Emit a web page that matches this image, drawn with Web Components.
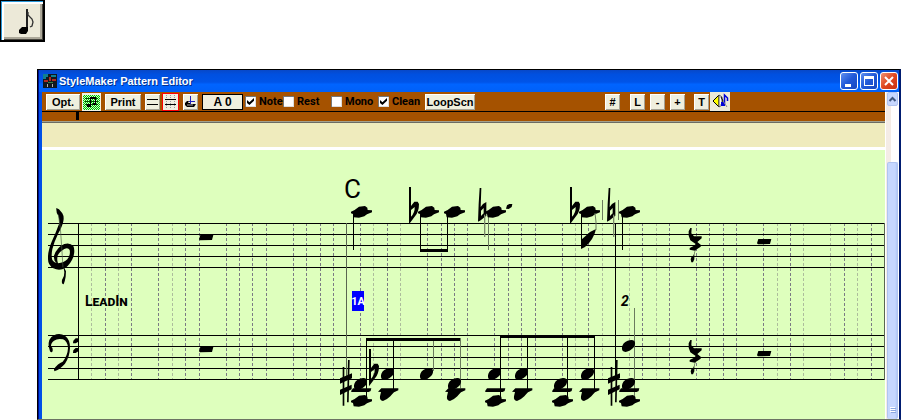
<!DOCTYPE html>
<html lang="en">
<head>
<meta charset="utf-8">
<title>StyleMaker Pattern Editor</title>
<style>
body { margin: 0; background: #fff; font-family: "Liberation Sans", Arial, sans-serif; }
pattern-window { margin: 27px 0 0 37px; }
</style>
</head>
<body>
<note-button></note-button>
<pattern-window caption="StyleMaker Pattern Editor">
    <tool-bar slot="tools">
        <tool-button label="Opt." style="--w:34px"></tool-button>
        <tool-button label="Edit notes" icon="pattern" flat style="--w:19px"></tool-button>
        <tool-button label="Print" style="--w:36px; margin-left:2px"></tool-button>
        <tool-button label="Staff" icon="staff" style="--w:15px; margin-left:2px"></tool-button>
        <tool-button label="Grid" icon="grid" flat style="--w:17px"></tool-button>
        <tool-button label="Hand" icon="hand" style="--w:15px; margin-left:2px"></tool-button>
        <tool-button label="A 0" outline style="--w:41px; margin-left:2px"></tool-button>
        <tool-check label="Note" checked style="--w:36px"></tool-check>
        <tool-check label="Rest" style="--w:46px"></tool-check>
        <tool-check label="Mono" style="--w:45px"></tool-check>
        <tool-check label="Clean" checked style="--w:45px"></tool-check>
        <tool-button label="LoopScn" style="--w:50px"></tool-button>
        <tool-button slot="right" label="#" style="--w:15px"></tool-button>
        <tool-button slot="right" label="L" style="--w:15px; margin-left:5px"></tool-button>
        <tool-button slot="right" label="-" style="--w:15px"></tool-button>
        <tool-button slot="right" label="+" style="--w:15px"></tool-button>
        <tool-button slot="right" label="T" style="--w:15px; margin-left:4px"></tool-button>
        <tool-button slot="right" label="Play" icon="play" flat style="--w:20px; margin-left:-4px"></tool-button>
    </tool-bar>
    <score-view></score-view>
</pattern-window>

<script>
class NoteButton extends HTMLElement
{
    constructor() {
        super();
        this.attachShadow({ mode: "open" });
        this.shadowRoot.innerHTML = `
            <style>
            :host { display: block; }
            button {
                display: block; width: 45px; height: 42px; padding: 0;
                border: 1px solid #000; border-right-width: 2px; border-bottom-width: 2px;
                background: #ece9d8;
                box-shadow: inset 1px 1px #2898d8, inset 3px 3px #fff, inset -1px -1px #45433c, inset -3px -3px #aca899;
            }
            svg { display: block; }
            </style>
            <button aria-label="Note">
                <svg width="42" height="39" viewBox="0 0 42 39">
                    <path d="M25 8h2v22h-2z" fill="#222"/>
                    <path d="M18 29l3-3h6v4l-2 3h-5l-2-1z"/>
                    <path d="M27 11v3l4 4 1 3-1 4-2 1" fill="none" stroke="#333" stroke-width="1.3"/>
                </svg>
            </button>
        `;
    }
}

const ICONS = {
    pattern: `<svg width="19" height="18" viewBox="0 0 19 18">
        <defs><pattern id="d" width="2" height="2" patternUnits="userSpaceOnUse"><path d="M0 0h1v1H0zM1 1h1v1H1z" fill="#00c000"/></pattern></defs>
        <path d="M0 0h19v18H0z" fill="#f4f4e8"/><path d="M1 2h17v15H1z" fill="#c8ffc8"/><path d="M1 2h17v15H1z" fill="url(#d)"/>
        <path d="M3 5.500h13M3 8.500h13M3 11.500h13" stroke="#005000"/><path d="M8 4h6v7h-1V6H9v6H8z"/><path d="M5 11h4v3H5zM11 10h3v2h-3z"/></svg>`,
    staff: `<svg width="15" height="16" viewBox="0 0 15 16"><path d="M2 5.500h11M2 10.500h11" stroke="#000"/></svg>`,
    grid: `<svg width="17" height="18" viewBox="0 0 17 18"><path d="M0 0h17v18H0z" fill="#f00"/><path d="M1 1h15v16H1z" fill="#f0ede0"/>
        <path d="M4.500 2v14M8.500 2v14M12.500 2v14" stroke="#999" stroke-dasharray="1 1"/><path d="M3 6.500h11M3 11.500h11" stroke="#000"/></svg>`,
    hand: `<svg width="15" height="16" viewBox="0 0 15 16"><path d="M2 9l2-2h2l-1 2h2l1 1h5l-2 3H4l-2-2z"/><path d="M7.500 2v8M6 7.500h6" stroke="#2020c0"/><path d="M4 11h6" stroke="#aaa"/></svg>`,
    play: `<svg width="20" height="19" viewBox="0 0 20 19"><path d="M0 0h20v19H0z" fill="#ece9d8"/>
        <path d="M3 9l6-6v12z" fill="#ff0" stroke="#000"/><path d="M9 3l3 2v8l-3 2z" fill="#fff" stroke="#555"/><path d="M11 5l2 4-2 4" fill="none" stroke="#000"/>
        <path d="M14.500 12V3l3 3v3" fill="none" stroke="#0000d8" stroke-width="1.500"/><path d="M11 10h4v4h-4z" fill="#0000d8"/><path d="M13 9l4 6" stroke="#888"/></svg>`
};

class ToolButton extends HTMLElement
{
    constructor() {
        super();
        this.attachShadow({ mode: "open" });
    }

    connectedCallback()
    {
        const label = this.getAttribute('label');
        const icon = ICONS[this.getAttribute('icon')];
        this.shadowRoot.innerHTML = `
            <style>
            :host { display: block; flex: none; }
            button {
                display: flex; align-items: center; justify-content: center;
                width: var(--w); height: 16px; padding: 0; border: 0;
                background: #efefde; color: #000;
                box-shadow: inset 1px 1px #fff, inset -1px -1px #a5a294;
                font: bold 11px/14px "Liberation Sans", Arial, sans-serif; white-space: nowrap;
            }
            :host([flat]) button { height: 18px; box-shadow: none; background: none; }
            :host([outline]) button { border: 1px solid #000; box-shadow: none; font-size: 12px; }
            svg { display: block; flex: none; }
            </style>
            <button ${icon ? `aria-label="${label}"` : ''}>${icon || label}</button>
        `;
    }
}

class ToolCheck extends HTMLElement
{
    constructor() {
        super();
        this.attachShadow({ mode: "open" });
    }

    connectedCallback()
    {
        this.shadowRoot.innerHTML = `
            <style>
            :host { display: block; flex: none; width: var(--w); }
            label { display: flex; align-items: center; gap: 3px; font: bold 11px/14px Roboto, "Liberation Sans", sans-serif; color: #000; }
            input {
                appearance: none; flex: none; width: 11px; height: 11px; margin: 0;
                background: #fff; box-shadow: inset 1px 1px #777, inset -1px -1px #ddd;
            }
            input:checked::before {
                content: ""; display: block; width: 7px; height: 7px; margin: 2px;
                background: #000; clip-path: polygon(0 30%, 35% 60%, 100% 0, 100% 40%, 35% 100%, 0 70%);
            }
            </style>
            <label><input type="checkbox" ${this.hasAttribute('checked') ? 'checked' : ''}>${this.getAttribute('label')}</label>
        `;
    }
}

class ToolBar extends HTMLElement
{
    constructor() {
        super();
        this.attachShadow({ mode: "open" });
        this.shadowRoot.innerHTML = `
            <style>
            :host { display: block; background: #a55200; }
            .row { display: flex; align-items: center; gap: 2px; height: 19px; padding: 0 4px; border-bottom: 1px solid #000; }
            .right { display: flex; align-items: center; gap: 5px; margin-left: auto; padding-right: 151px; }
            .ruler { height: 9px; padding-left: 34px; border-bottom: 1px solid #a5a08c; }
            .ruler i { display: block; width: 3px; height: 8px; background: #000; }
            .lyrics { height: 24px; background: #efebbd; border-top: 1px solid #6b6b63; border-bottom: 3px solid #fff; }
            </style>
            <div class="row"><slot></slot><div class="right"><slot name="right"></slot></div></div>
            <div class="ruler"><i></i></div>
            <div class="lyrics"></div>
        `;
    }
}

class PatternWindow extends HTMLElement
{
    constructor() {
        super();
        this.attachShadow({ mode: "open" });
    }

    connectedCallback()
    {
        this.shadowRoot.innerHTML = `
            <style>
            :host {
                display: block; box-sizing: border-box; overflow: hidden;
                border: 1px solid #000; border-right: 2px solid #001c70; border-bottom-color: #6b7363;
                box-shadow: inset 1px 0 #000c90, inset 4px 0 #0050e8;
                padding-left: 4px;
            }
            header {
                display: flex; align-items: center; gap: 2px; height: 22px; margin-left: -3px; padding: 0 1px 0 4px;
                background: linear-gradient(#0848c8, #0050e0 20%, #0054e8 55%, #0064ff 65%, #0060f8);
                color: #fff;
            }
            h1 { flex: 1; margin: 0; font: bold 11px/16px "Liberation Sans", Arial, sans-serif; text-shadow: 1px 1px #003090; }
            header button {
                display: block; width: 18px; height: 18px; padding: 0; border: 1px solid #fff; border-radius: 3px;
                background: linear-gradient(135deg, #6090f0, #2058d8 50%, #1848c0);
            }
            header button.close { background: linear-gradient(135deg, #f09070, #e04820 50%, #c83010); }
            svg { display: block; }
            .body { display: flex; }
            main { flex: 1; min-width: 0; background: #deffbd; }
            .scroll { display: flex; flex-direction: column; width: 14px; background: linear-gradient(90deg, #fff 1px, #f4ece6 1px, #f4ece6 6px, #fff 6px); }
            .scroll button { margin: 0 1px 0 2px; padding: 0; border: 1px solid #b0c4f0; border-radius: 2px; background: #c6d7ff; }
            .up { height: 14px; }
            .scroll .thumb { flex: 1; display: flex; justify-content: center; align-items: flex-end; margin-top: 56px; border-bottom: 0; background: linear-gradient(90deg, #c6d7ff 7px, #b0c8f8); }
            </style>
            <header>
                <svg width="14" height="14" viewBox="0 0 14 14">
                    <path d="M0 0h14v14H0z" fill="#101820"/><path d="M0 0h5v3H3v2H0zM8 1h5v2H8z" fill="#108090"/>
                    <path d="M1 6h4v2H1zM6 3h2v4H6zM9 5h4v2H9z" fill="#b02820"/><path d="M4 10h1v3H4zM9 10h1v3H9z" fill="#b0b0b0"/><path d="M5 8h5v1H5z" fill="#308040"/>
                </svg>
                <h1>${this.getAttribute('caption')}</h1>
                <button aria-label="Minimize"><svg width="16" height="16"><path d="M4 11h6v3H4z" fill="#fff"/></svg></button>
                <button aria-label="Maximize"><svg width="16" height="16"><path d="M3 3h10v10H3zM4 6v6h8V6z" fill="#fff" fill-rule="evenodd"/></svg></button>
                <button class="close" aria-label="Close"><svg width="16" height="16"><path d="M4 4l8 8M12 4l-8 8" stroke="#fff" stroke-width="2"/></svg></button>
            </header>
            <div class="body">
                <main><slot name="tools"></slot><slot></slot></main>
                <div class="scroll">
                    <button class="up" aria-label="Scroll up"><svg width="9" height="12"><path d="M1.500 8L4.500 5l3 3" fill="none" stroke="#405880" stroke-width="2"/></svg></button>
                    <button class="thumb" aria-label="Scroll position"><svg width="9" height="14"><path d="M2 2.500h5M2 4.500h5M2 6.500h5" stroke="#fff"/><path d="M3 3.500h5M3 5.500h5M3 7.500h5" stroke="#8ca8e0"/></svg></button>
                </div>
            </div>
        `;
    }
}

// Glyph outlines, drawn at three units to the pixel
const GLYPHS = {
    treble: `<path fill-rule="evenodd" d="M25 0L33 4L43 16Q49 26 46 40Q43 55 31 76Q18 103 13 124Q9 144 13 156Q18 164 26 165Q16 158 18 143Q27 117 49 108Q66 103 76 114Q82 127 76 147Q68 168 52 180Q34 190 16 181Q-1 171 0 151Q-1 130 11 101Q24 73 33 48Q35 34 31 23Q24 16 25 0ZM30 166Q48 164 58 154Q68 141 65 126Q60 117 49 123Q34 131 29 143Q26 156 30 166Z"/>
        <path d="M31 20L37 60L41 115L45 178" fill="none" stroke="#506048" stroke-width="2"/>
        <path d="M46 174L54 190L53 206Q51 219 47 229Q40 229 42 216Q50 203 49 193Z"/>`,
    bass: `<path d="M2 37Q0 13 18 4Q34-4 51 5Q67 17 66 42Q65 69 51 89Q35 107 19 112L18 105Q29 89 44 83Q59 65 60 42Q59 22 45 16Q29 12 18 20Q8 27 9 38Q15 39 14 51Q11 58 6 52Z"/>
        <path d="M76 20l7-7h8v10l-8 5h-8zM76 49l7-7h8v10l-8 5h-8z"/>`,
    ledgerHead: `<path d="M0 17L11 12L24 2L42 0L49 5L50 12L63 13V19L48 25L40 31L24 35L8 34L6 24L0 22Z"/>`,
    head: `<path d="M0 22Q1 9 17 2Q31-3 37 3Q42 10 36 21Q26 33 11 36Q-2 36 0 22Z"/>`,
    lowHead: `<path d="M0 5L10-5H61V1L48 7Q41 14 37 19Q25 31 15 33Q4 32 6 19L9 6Z"/>`,
    ledger: `<path d="M0 4L6-5H61L59 3L53 6H2Z"/>`,
    flat: `<path fill-rule="evenodd" d="M0 0h6v57L16 44h10l4 7Q30 74 18 88L0 112zM6 69v20Q18 77 17 60z"/>`,
    natural: `<path fill-rule="evenodd" d="M5 0h5L8 57L15 48L25 42V83L8 97L0 101L2 47zM9 68V84L17 76V60z"/><path d="M18 80h4v67h-4z" fill="#7c8b6c"/>`,
    sharp: `<path d="M8 21h5v116H8zM24 0h5L26 127h-5z"/><path d="M0 55L36 40V55L0 71zM0 89L35 74V88L0 105z"/>`,
    quarterRest: `<path d="M4 0h4L7 16L15 25H38V31L25 42L36 51L35 56L20 66L16 78V94L12 103H7L5 94L8 85L13 83L18 68L2 65V60L15 53L20 48L4 37L-1 23V10z"/>`,
    rest: `<path d="M4 0H43L39 15L3 16L0 13z"/>`,
    dot: `<path d="M0 14L3 4L10 0H19L17 9L8 15z"/>`
};

class ScoreView extends HTMLElement
{
    constructor() {
        super();
        this.attachShadow({ mode: "open" });
        this.shadowRoot.innerHTML = `
            <style>
            :host { display: block; background: #deffbd; }
            svg { display: block; width: 100%; height: auto; }
            text { font-family: Roboto, "Liberation Sans", sans-serif; font-weight: bold; }
            .chord { font-size: 26px; font-weight: normal; }
            .section { font-size: 14px; font-variant: small-caps; }
            .bar { font-size: 11px; }
            .number { font-size: 14px; font-style: italic; }
            </style>
            <svg viewBox="42 150 843 269" role="img" aria-label="Score">
                <g shape-rendering="crispEdges">${this.grid()}${this.staves()}${this.stems()}</g>
                ${this.notes()}
                <text class="chord" x="344" y="198">C</text>
                <text class="section" x="85" y="306">LeadIn</text>
                <path d="M352 291h12v20h-12z" fill="#00f"/>
                <text class="bar" x="358" y="305" fill="#fff" text-anchor="middle">1A</text>
                <text class="number" x="621" y="306">2</text>
            </svg>
        `;
    }

    grid()
    {
        const light = [1, 3, 7, 22, 24, 37, 39, 41, 43, 52, 54, 56, 58];
        let out = '';
        // five steps to the beat, the beat itself is left open
        for (let k = 1; k < 60; k++) {
            if (k % 5 === 0) continue;
            const x = Math.floor(78.2 + k * 13.44);
            const color = light.includes(k) ? '#adbd9c' : '#7b7b84';
            out += `<path d="M${x + 0.5} 223V379" stroke="${color}" stroke-dasharray="3 2"/>`;
        }
        return out;
    }

    staves()
    {
        let out = '';
        for (const top of [223, 335]) {
            for (let i = 0; i < 5; i++) {
                out += `<path d="M48 ${top + i * 11}h837v1h-837z"/>`;
            }
        }
        return out + `<path d="M78 223h1v157h-1zM615 223h1v157h-1z"/>
            <path d="M346 223h1v157h-1zM884 223h1v157h-1z" fill="#5a6650"/>`;
    }

    stems()
    {
        return `
            <path d="M353 212h1v38h-1zM420 212h1v38h-1zM447 212h1v38h-1zM581 212h1v36h-1zM622 212h1v38h-1z"/>
            <path d="M420 249h28v3h-28z"/>
            <path d="M366 338h94v3h-94zM366 338h1v61h-1zM393 338h1v54h-1z"/>
            <path d="M500 335h95v3h-95zM500 335h1v64h-1zM527 335h1v56h-1zM567 335h1v64h-1zM594 335h1v56h-1z"/>
            <path d="M488 212h1v38h-1zM602 200h1v20h-1zM618 200h1v20h-1zM433 341h1v30h-1zM460 338h1v50h-1zM634 308h1v92h-1z" fill="#6b7b5e"/>
        `;
    }

    glyph(name, x, y)
    {
        return `<g transform="translate(${x} ${y}) scale(.3333)">${GLYPHS[name]}</g>`;
    }

    notes()
    {
        const list = [
            ['treble', 48, 208], ['bass', 48, 334],
            ['rest', 199, 235], ['rest', 199, 347], ['rest', 757, 239], ['rest', 757, 351],
            ['quarterRest', 689, 228], ['quarterRest', 689, 340],
            ['flat', 409, 187], ['flat', 570, 187], ['flat', 369, 349],
            ['natural', 478, 188], ['natural', 607, 188],
            ['sharp', 340, 360], ['sharp', 608, 360], ['dot', 506, 204]
        ];
        for (const x of [351, 418, 444, 485, 579, 619]) list.push(['ledgerHead', x, 206]);
        for (const [x, y] of [[354, 378], [381, 368], [420, 368], [448, 378], [488, 368], [515, 368], [554, 378], [581, 368], [622, 340], [622, 378]]) list.push(['head', x, y]);
        for (const x of [351, 485, 552, 619]) list.push(['ledger', x, 390], ['ledgerHead', x, 395]);
        for (const x of [378, 445, 512, 579]) list.push(['lowHead', x, 390]);
        return list.map(g => this.glyph(...g)).join('') + `
            <path d="M581 249V240L590 232L596 229Q594 239 585 247z"/>
            <path d="M595 213L596 222V230" fill="none" stroke="#6b7b5e"/>`;
    }
}

customElements.define('note-button', NoteButton);
customElements.define('tool-button', ToolButton);
customElements.define('tool-check', ToolCheck);
customElements.define('tool-bar', ToolBar);
customElements.define('pattern-window', PatternWindow);
customElements.define('score-view', ScoreView);
</script>
</body>
</html>
